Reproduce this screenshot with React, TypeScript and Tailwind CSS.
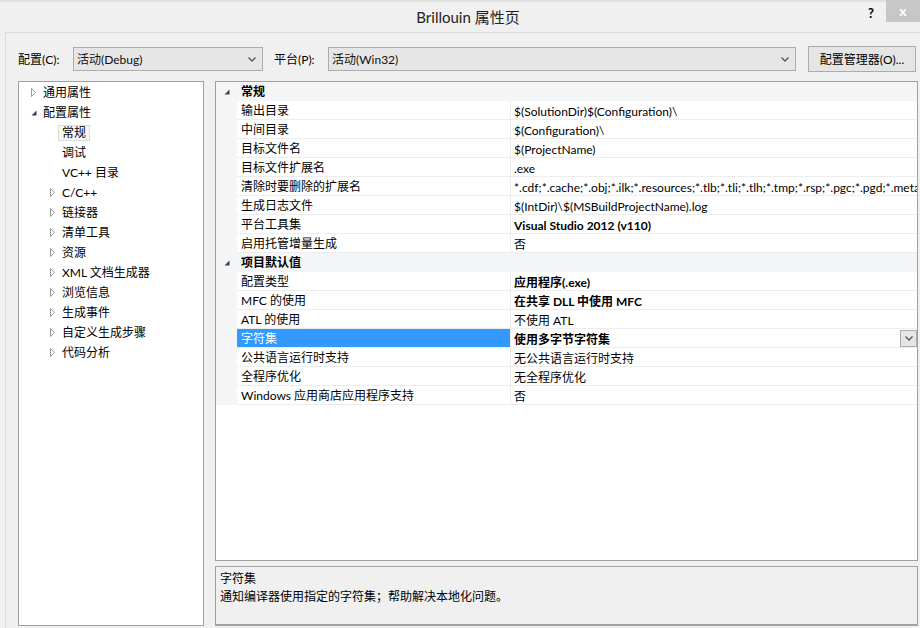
import React from 'react';

type TreeItem = { label: string; level: number; arrow?: 'open' | 'closed'; selected?: boolean };

const tree: TreeItem[] = [
  { label: '通用属性', level: 0, arrow: 'closed' },
  { label: '配置属性', level: 0, arrow: 'open' },
  { label: '常规', level: 1, selected: true },
  { label: '调试', level: 1 },
  { label: 'VC++ 目录', level: 1 },
  { label: 'C/C++', level: 1, arrow: 'closed' },
  { label: '链接器', level: 1, arrow: 'closed' },
  { label: '清单工具', level: 1, arrow: 'closed' },
  { label: '资源', level: 1, arrow: 'closed' },
  { label: 'XML 文档生成器', level: 1, arrow: 'closed' },
  { label: '浏览信息', level: 1, arrow: 'closed' },
  { label: '生成事件', level: 1, arrow: 'closed' },
  { label: '自定义生成步骤', level: 1, arrow: 'closed' },
  { label: '代码分析', level: 1, arrow: 'closed' },
];

type GridRow =
  | { kind: 'cat'; label: string }
  | { kind: 'prop'; name: string; value: string; bold?: boolean; selected?: boolean };

const rows: GridRow[] = [
  { kind: 'cat', label: '常规' },
  { kind: 'prop', name: '输出目录', value: '$(SolutionDir)$(Configuration)\\' },
  { kind: 'prop', name: '中间目录', value: '$(Configuration)\\' },
  { kind: 'prop', name: '目标文件名', value: '$(ProjectName)' },
  { kind: 'prop', name: '目标文件扩展名', value: '.exe' },
  {
    kind: 'prop',
    name: '清除时要删除的扩展名',
    value: '*.cdf;*.cache;*.obj;*.ilk;*.resources;*.tlb;*.tli;*.tlh;*.tmp;*.rsp;*.pgc;*.pgd;*.meta',
  },
  { kind: 'prop', name: '生成日志文件', value: '$(IntDir)\\$(MSBuildProjectName).log' },
  { kind: 'prop', name: '平台工具集', value: 'Visual Studio 2012 (v110)', bold: true },
  { kind: 'prop', name: '启用托管增量生成', value: '否' },
  { kind: 'cat', label: '项目默认值' },
  { kind: 'prop', name: '配置类型', value: '应用程序(.exe)', bold: true },
  { kind: 'prop', name: 'MFC 的使用', value: '在共享 DLL 中使用 MFC', bold: true },
  { kind: 'prop', name: 'ATL 的使用', value: '不使用 ATL' },
  { kind: 'prop', name: '字符集', value: '使用多字节字符集', bold: true, selected: true },
  { kind: 'prop', name: '公共语言运行时支持', value: '无公共语言运行时支持' },
  { kind: 'prop', name: '全程序优化', value: '无全程序优化' },
  { kind: 'prop', name: 'Windows 应用商店应用程序支持', value: '否' },
];

const Chevron = () => (
  <svg width="8" height="5" viewBox="0 0 8 5">
    <polyline points="0.5,0.5 4,4 7.5,0.5" fill="none" stroke="#555" strokeWidth="1.3" />
  </svg>
);

const Closed = () => (
  <svg width="6" height="9" viewBox="0 0 6 9">
    <polygon points="0.5,0.5 4.5,4.5 0.5,8.5" fill="#fff" stroke="#9a9a9a" strokeWidth="1" />
  </svg>
);

const Open = () => (
  <svg width="6" height="6" viewBox="0 0 6 6">
    <polygon points="5.5,0.5 5.5,5.5 0.5,5.5" fill="#404040" />
  </svg>
);

const Combo: React.FC<{ value: string; width: string }> = ({ value, width }) => (
  <div
    className={`${width} shrink-0 h-[24px] flex items-center justify-between pl-[3px] pr-[6px] bg-[#e6e6e6] border border-[#acacac]`}
  >
    <span className="text-[12px] leading-[16px] pt-[1px] text-[#111]">{value}</span>
    <Chevron />
  </div>
);

export default function App() {
  return (
    <div className="w-[920px] h-[628px] overflow-hidden bg-[#f0f0f0] text-black font-['Lato','Noto_Sans_CJK_SC',sans-serif] flex flex-col">
      {/* Title bar */}
      <div className="relative h-[32px] shrink-0 flex items-center justify-center border-t-2 border-[#e0e0e0]">
        <span className="text-[15px] leading-none text-[#222] pl-[16px]">Brillouin 属性页</span>
        <span className="absolute left-[868px] top-[5px] text-[13px] font-bold leading-none">?</span>
        <div className="absolute right-0 top-[-2px] w-[34px] h-[22px] bg-[#c7c7c7] flex items-center justify-center">
          <span className="text-white text-[14px] font-bold leading-none">x</span>
        </div>
      </div>

      {/* Dialog body */}
      <div className="ml-[5px] flex-1 border-t border-l border-[#dcdcdc] pl-[12px] pt-[13px] flex flex-col">
        {/* Toolbar */}
        <div className="h-[26px] flex items-center">
          <span className="w-[55px] shrink-0 text-[12px] leading-[16px] pt-[1px]">配置(C):</span>
          <Combo value="活动(Debug)" width="w-[190px]" />
          <span className="ml-[11px] w-[54px] shrink-0 text-[12px] leading-[16px] pt-[1px]">平台(P):</span>
          <Combo value="活动(Win32)" width="w-[468px]" />
          <div className="ml-[12px] w-[108px] shrink-0 h-[26px] flex items-center justify-center bg-[#e5e5e5] border border-[#acacac] text-[12px] leading-[16px] pt-[1px]">
            配置管理器(O)...
          </div>
        </div>

        {/* Main */}
        <div className="mt-[9px] h-[545px] flex gap-[11px]">
          {/* Tree */}
          <div className="w-[186px] shrink-0 h-full bg-white border border-[#a0a0a0]">
            {tree.map((t, i) => (
              <div
                key={i}
                className={`h-[20px] flex items-center whitespace-nowrap pt-[1px] ${t.level === 0 ? 'pl-[12px]' : 'pl-[31px]'}`}
              >
                <span className="w-[12px] shrink-0 flex items-center">
                  {t.arrow === 'closed' && <Closed />}
                  {t.arrow === 'open' && <Open />}
                </span>
                {t.selected ? (
                  <span className="-ml-[4px] h-[16px] px-[3px] flex items-center border border-[#dadada] bg-[#f7f7f7] text-[12px] leading-[16px]">
                    {t.label}
                  </span>
                ) : (
                  <span className="text-[12px] leading-[16px]">{t.label}</span>
                )}
              </div>
            ))}
          </div>

          {/* Right column */}
          <div className="w-[703px] shrink-0 flex flex-col gap-[5px]">
            <div className="h-[480px] bg-white border border-[#a0a0a0] overflow-hidden">
              {rows.map((r, i) =>
                r.kind === 'cat' ? (
                  <div key={i} className="h-[19px] flex bg-[#f4f5f7]">
                    <div className="w-[21px] shrink-0 flex items-center justify-center pl-[1px]">
                      <Open />
                    </div>
                    <div className="flex-1 flex items-center pl-[4px] pt-[1px] text-[12px] font-bold leading-[16px]">
                      {r.label}
                    </div>
                  </div>
                ) : (
                  <div key={i} className="h-[19px] flex">
                    <div className="w-[21px] shrink-0 bg-[#f4f5f7]" />
                    <div
                      className={`w-[274px] shrink-0 flex items-center pl-[4px] pt-[2px] text-[12px] leading-[16px] whitespace-nowrap border-b border-r border-[#ededed] ${
                        r.selected ? 'bg-[#3399ff] text-white' : ''
                      }`}
                    >
                      {r.name}
                    </div>
                    <div className="flex-1 min-w-0 flex items-center justify-between pl-[3px] border-b border-[#ededed]">
                      <span
                        className={`text-[12px] leading-[17px] pt-[2px] whitespace-nowrap overflow-hidden ${r.bold ? 'font-bold' : ''}`}
                      >
                        {r.value}
                      </span>
                      {r.selected && (
                        <div className="shrink-0 w-[17px] h-[17px] flex items-center justify-center bg-[#e6e6e6] border border-[#acacac]">
                          <Chevron />
                        </div>
                      )}
                    </div>
                  </div>
                ),
              )}
            </div>

            {/* Description */}
            <div className="h-[60px] bg-[#f0f0f0] border border-[#a0a0a0] border-b-2 pl-[4px] pt-[5px] flex flex-col gap-[4px]">
              <span className="text-[12px] leading-[14px]">字符集</span>
              <span className="text-[12px] leading-[14px]">通知编译器使用指定的字符集；帮助解决本地化问题。</span>
            </div>
          </div>
        </div>
      </div>
    </div>
  );
}
